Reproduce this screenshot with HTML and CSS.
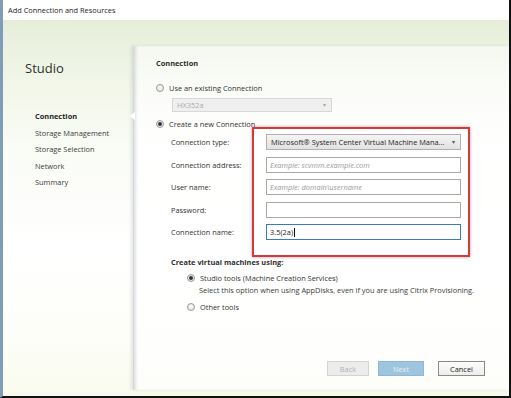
FILE: index.html
```html
<!DOCTYPE html>
<html>
<head>
<meta charset="utf-8">
<link rel="stylesheet" href="styles.css">
</head>
<body>
<div class="window">
  <div class="titlebar">Add Connection and Resources</div>
  <div class="body">
    <aside class="sidebar">
      <div class="brand">Studio</div>
      <nav class="nav">
        <div class="nav-item active">Connection</div>
        <div class="nav-item">Storage Management</div>
        <div class="nav-item">Storage Selection</div>
        <div class="nav-item">Network</div>
        <div class="nav-item">Summary</div>
      </nav>
    </aside>
    <main class="panel">
      <span class="notch"></span>
      <div class="heading">Connection</div>
      <div class="radio-row first"><span class="radio"></span>Use an existing Connection</div>
      <div class="select disabled"><span>HX352a</span><span class="caret">▾</span></div>
      <div class="radio-row"><span class="radio checked"></span>Create a new Connection</div>
      <div class="form">
        <div class="highlight"></div>
        <div class="label r1">Connection type:</div>
        <div class="select field r1"><span>Microsoft® System Center Virtual Machine Mana...</span><span class="caret">▾</span></div>
        <div class="label r2">Connection address:</div>
        <div class="input field r2 placeholder">Example: scvmm.example.com</div>
        <div class="label r3">User name:</div>
        <div class="input field r3 placeholder">Example: domain\username</div>
        <div class="label r4">Password:</div>
        <div class="input field r4"></div>
        <div class="label r5">Connection name:</div>
        <div class="input field r5 focus">3.5(2a)<span class="cursor"></span></div>
      </div>
      <div class="subheading">Create virtual machines using:</div>
      <div class="radio-row indent"><span class="radio checked"></span>Studio tools (Machine Creation Services)</div>
      <div class="hint">Select this option when using AppDisks, even if you are using Citrix Provisioning.</div>
      <div class="radio-row indent other"><span class="radio"></span>Other tools</div>
      <div class="buttons">
        <div class="btn back">Back</div>
        <div class="btn next">Next</div>
        <div class="btn cancel">Cancel</div>
      </div>
    </main>
  </div>
</div>
</body>
</html>
```

FILE: styles.css
```css
html, body {
  margin: 0;
  padding: 0;
}
body {
  width: 511px;
  height: 398px;
  overflow: hidden;
  font-family: "Open Sans", "Noto Sans", sans-serif;
  font-size: 7.4px;
  color: #333;
}
.window {
  box-sizing: border-box;
  width: 511px;
  height: 398px;
  border-left: 3px solid #7f9cb8;
  border-right: 2px solid #111;
  border-bottom: 2px solid #111;
  display: flex;
  flex-direction: column;
  background: linear-gradient(180deg, #e6eed9 20px, #eff5e6 70px, #fafcf6 150px, #ffffff 250px, #fdfef8 340px, #f8fbec 396px);
}
.titlebar {
  height: 20px;
  flex: none;
  background: #fff;
  display: flex;
  align-items: center;
  padding-left: 5px;
  font-size: 7.4px;
  color: #1e1e1e;
}
.body {
  flex: 1;
  display: flex;
  min-height: 0;
}
.sidebar {
  width: 130px;
  flex: none;
  padding-left: 22px;
  box-sizing: border-box;
}
.brand {
  font-size: 13px;
  color: #2e2e2e;
  margin-top: 38px;
  line-height: 20px;
}
.nav {
  margin-top: 30px;
  padding-left: 10px;
}
.nav-item {
  line-height: 16.6px;
  color: #3c3c3c;
}
.nav-item.active {
  font-weight: 700;
  color: #262626;
}
.panel {
  flex: 1;
  margin-top: 26px;
  margin-bottom: 6px;
  position: relative;
  padding-left: 22px;
  border-left: 1px solid #d4d7dc;
  box-shadow: inset 3px 0 3px -1px rgba(120,125,135,0.22), -2px 0 3px rgba(160,165,170,0.25);
  background: linear-gradient(180deg, rgba(255,255,255,0.5), rgba(255,255,255,0.9) 100px, rgba(255,255,255,0.7));
}
.notch {
  position: absolute;
  left: -4px;
  top: 66px;
  width: 0;
  height: 0;
  border-top: 4px solid transparent;
  border-bottom: 4px solid transparent;
  border-right: 5px solid #fff;
}
.heading {
  font-weight: 700;
  margin-top: 11px;
  line-height: 12px;
  color: #2e2e2e;
}
.radio-row {
  display: flex;
  align-items: center;
  line-height: 12px;
}
.radio-row.first {
  margin-top: 13px;
}
.radio {
  width: 8px;
  height: 8px;
  box-sizing: border-box;
  border-radius: 50%;
  border: 1px solid #9a9a9a;
  background: radial-gradient(circle at 50% 40%, #fff, #dcdcdc);
  margin-right: 5px;
  flex: none;
  display: flex;
  align-items: center;
  justify-content: center;
}
.radio.checked::after {
  content: "";
  width: 4px;
  height: 4px;
  border-radius: 50%;
  background: #333;
}
.select {
  box-sizing: border-box;
  display: flex;
  align-items: center;
  justify-content: space-between;
  border: 1px solid #b0b0b0;
  background: linear-gradient(180deg, #f4f4f4, #e2e2e2);
  padding: 0 5px 0 4px;
  color: #1e1e1e;
}
.select.disabled {
  margin-left: 16px;
  margin-top: 4px;
  margin-bottom: 6px;
  width: 160px;
  height: 14px;
  color: #aaa;
  border-color: #d8d8d8;
  background: #efefef;
}
.caret {
  font-size: 6px;
  color: #555;
}
.select.disabled .caret {
  color: #aaa;
}
.form {
  display: grid;
  grid-template-columns: 95px 195px;
  grid-template-rows: repeat(5, 16px);
  row-gap: 6.5px;
  margin-top: 4px;
  margin-left: 15px;
}
.r1 { grid-row: 1; }
.r2 { grid-row: 2; }
.r3 { grid-row: 3; }
.r4 { grid-row: 4; }
.r5 { grid-row: 5; }
.highlight {
  grid-column: 2;
  grid-row: 1 / 6;
  margin: -7px -9px -17px -14px;
  border: 2px solid #d7373f;
  box-shadow: 0 0 3px rgba(0,0,0,0.35);
}
.label {
  grid-column: 1;
  display: flex;
  align-items: center;
}
.field {
  grid-column: 2;
  box-sizing: border-box;
  height: 16px;
}
.input {
  border: 1px solid #a9a9a9;
  background: #fff;
  display: flex;
  align-items: center;
  padding-left: 3px;
  color: #1e1e1e;
}
.placeholder {
  font-style: italic;
  color: #999;
}
.focus {
  border-color: #3a7bbf;
}
.cursor {
  width: 1px;
  height: 9px;
  background: #111;
  margin-left: 0.5px;
}
.subheading {
  font-weight: 700;
  margin-top: 16px;
  margin-left: 15px;
  line-height: 12px;
  color: #2e2e2e;
}
.radio-row.indent {
  margin-left: 31px;
  margin-top: 4px;
}
.hint {
  margin-left: 43px;
  line-height: 12px;
  color: #3c3c3c;
}
.radio-row.other {
  margin-top: 5px;
}
.buttons {
  display: flex;
  margin-top: 48px;
  margin-left: 171px;
}
.btn {
  box-sizing: border-box;
  height: 15px;
  display: flex;
  align-items: center;
  justify-content: center;
  border: 1px solid #ccc;
}
.back {
  width: 42px;
  background: #ececec;
  color: #b2b2b2;
  border-color: #d4d4d4;
}
.next {
  width: 46px;
  margin-left: 9px;
  background: #9fc5de;
  border-color: #8fb8d4;
  color: #e3eff7;
}
.cancel {
  width: 47px;
  margin-left: 14px;
  background: linear-gradient(180deg, #fdfdfd, #ededed);
  border-color: #8a8a8a;
  color: #222;
}
```
